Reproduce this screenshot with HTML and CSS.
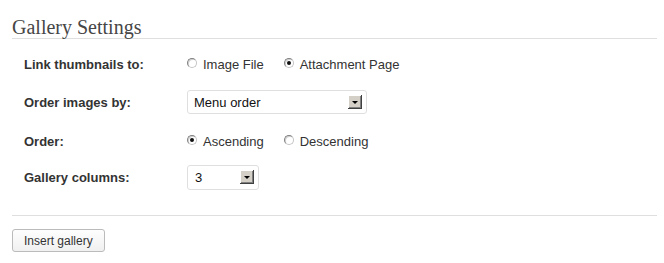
FILE: index.html
```html
<!DOCTYPE html>
<html>
<head>
<meta charset="utf-8">
<link rel="stylesheet" href="styles.css">
</head>
<body>
<div class="wrap">
  <h3 class="title">Gallery Settings</h3>
  <div class="form">
    <div class="label">Link thumbnails to:</div>
    <div class="options">
      <div class="option"><span class="radio"></span>Image File</div>
      <div class="option"><span class="radio checked"></span>Attachment Page</div>
    </div>

    <div class="label">Order images by:</div>
    <div class="field">
      <div class="select select-wide"><span class="value">Menu order</span><span class="arrow"></span></div>
    </div>

    <div class="label">Order:</div>
    <div class="options">
      <div class="option"><span class="radio checked"></span>Ascending</div>
      <div class="option"><span class="radio"></span>Descending</div>
    </div>

    <div class="label">Gallery columns:</div>
    <div class="field">
      <div class="select select-narrow"><span class="value">3</span><span class="arrow"></span></div>
    </div>
  </div>
  <div class="divider"></div>
  <button class="button">Insert gallery</button>
</div>
</body>
</html>
```
FILE: styles.css
```css
html, body {
  margin: 0;
  padding: 0;
  background: #fff;
}

.wrap {
  padding: 17px 7px 0 12px;
  font-family: "Liberation Sans", Arial, sans-serif;
}

.title {
  margin: 0;
  font-family: "Liberation Serif", "Times New Roman", serif;
  font-weight: normal;
  font-size: 20px;
  line-height: 21px;
  color: #464646;
  border-bottom: 1px solid #dfdfdf;
}

.form {
  display: grid;
  grid-template-columns: 163px 1fr;
  grid-template-rows: 38px 38px 40px 32px;
  align-items: center;
  margin-top: 6px;
  padding-left: 12px;
}

.label {
  font-weight: bold;
  font-size: 13px;
  color: #333;
}

.options {
  display: flex;
  align-items: center;
  gap: 20px;
}

.option {
  display: flex;
  align-items: center;
  font-size: 13px;
  color: #333;
}

.radio {
  box-sizing: border-box;
  width: 10px;
  height: 10px;
  border: 1px solid #808080;
  border-right-color: #c4c4c4;
  border-bottom-color: #c4c4c4;
  border-radius: 50%;
  background: #fff;
  box-shadow: inset 1px 1px 0 #d0d0d0;
  margin-right: 6px;
  position: relative;
  top: -1px;
  display: flex;
  align-items: center;
  justify-content: center;
}

.radio.checked::after {
  content: "";
  width: 4px;
  height: 4px;
  border-radius: 50%;
  background: #111;
}

.field {
  display: flex;
  align-items: center;
}

.select {
  box-sizing: border-box;
  display: flex;
  align-items: center;
  justify-content: space-between;
  height: 24px;
  border: 1px solid #dfdfdf;
  border-radius: 3px;
  background: #fff;
  padding: 0 4px 0 6px;
  font-size: 13px;
  color: #111;
}

.select-wide {
  width: 180px;
}

.select-narrow {
  width: 72px;
  height: 25px;
  padding-left: 7px;
}

.arrow {
  box-sizing: border-box;
  width: 14px;
  height: 14px;
  background: #d4d0c8;
  box-shadow: inset -1px -1px 0 #404040, inset 1px 1px 0 #ffffff, inset -2px -2px 0 #808080;
  display: flex;
  align-items: center;
  justify-content: center;
}

.arrow::after {
  content: "";
  width: 0;
  height: 0;
  border-left: 3px solid transparent;
  border-right: 3px solid transparent;
  border-top: 3px solid #000;
  margin: 1px 1px 0 0;
}

.divider {
  border-top: 1px solid #dfdfdf;
  margin-top: 22px;
}

.button {
  display: block;
  margin-top: 13px;
  height: 23px;
  padding: 0 11px;
  border: 1px solid #bbb;
  border-radius: 3px;
  background: linear-gradient(#fefefe, #f0f0f0);
  font-family: "Liberation Sans", Arial, sans-serif;
  font-size: 12px;
  color: #333;
}
```
